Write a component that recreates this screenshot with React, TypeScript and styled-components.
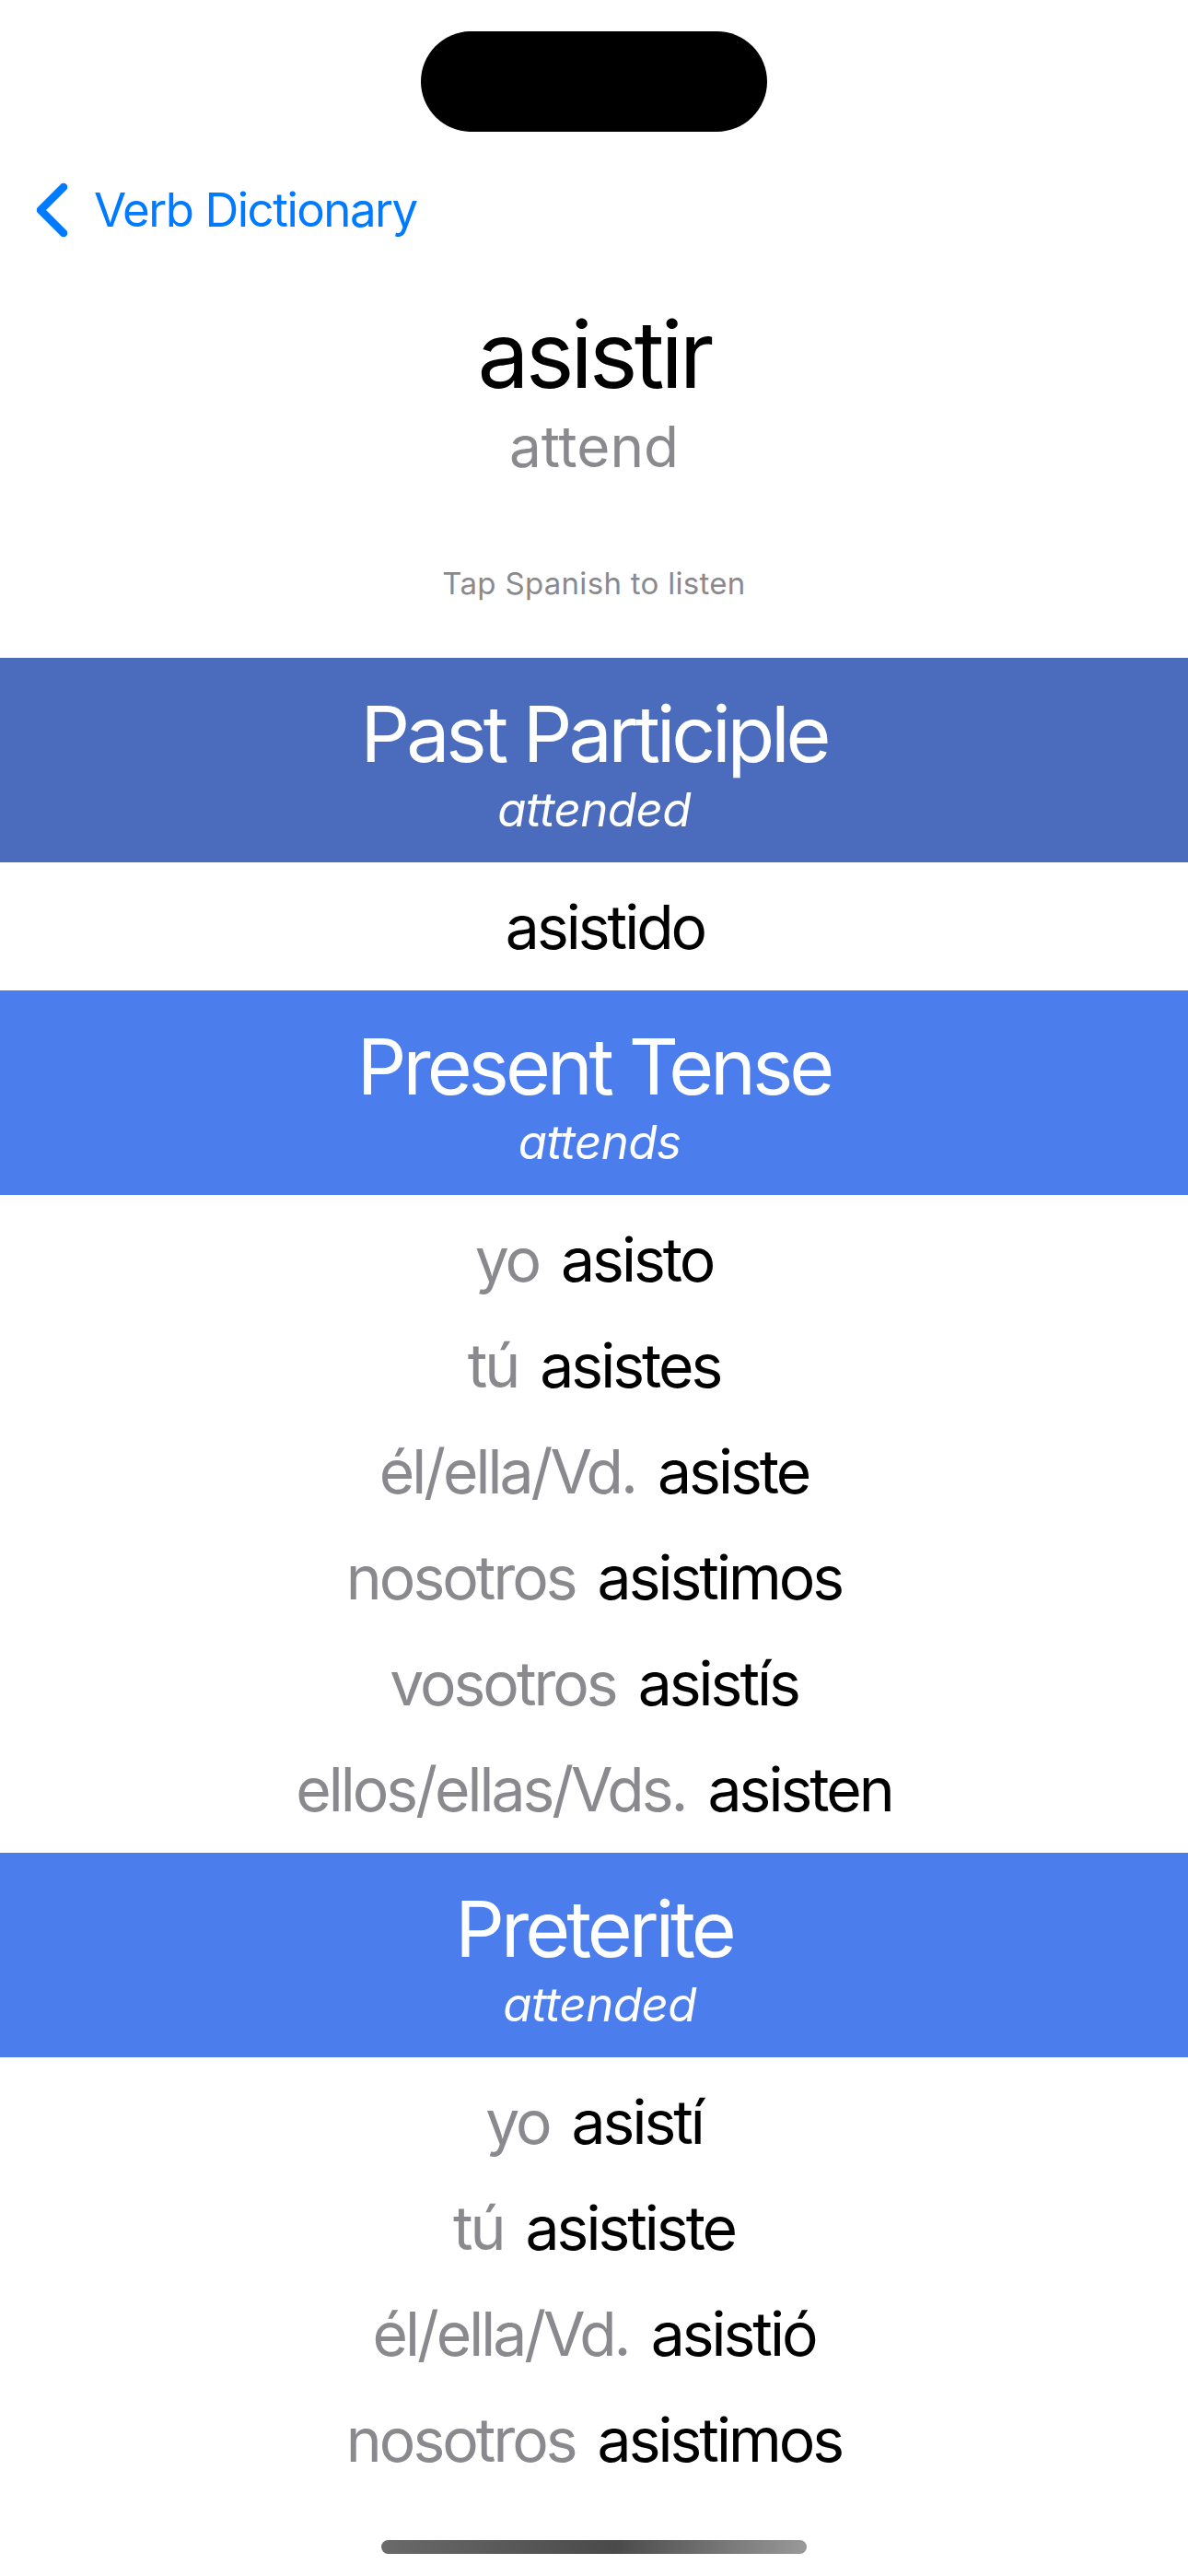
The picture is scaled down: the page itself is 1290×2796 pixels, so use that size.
import React from "react";
import styled, { createGlobalStyle } from "styled-components";

const GlobalStyle = createGlobalStyle`
  html, body {
    margin: 0;
    padding: 0;
    background: #ffffff;
  }
  body {
    font-family: Inter, "Noto Sans", "Liberation Sans", sans-serif;
    -webkit-font-smoothing: antialiased;
  }
`;

const Screen = styled.div`
  width: 1290px;
  height: 2796px;
  display: flex;
  flex-direction: column;
  background: #ffffff;
  overflow: hidden;
`;

const StatusArea = styled.div`
  height: 180px;
  flex: none;
  display: flex;
  justify-content: center;
  padding-top: 34px;
  box-sizing: border-box;
`;

const Island = styled.div`
  width: 376px;
  height: 109px;
  border-radius: 55px;
  background: #000000;
`;

const NavBar = styled.div`
  height: 95px;
  flex: none;
  display: flex;
  align-items: center;
  padding-left: 36px;
  gap: 24px;
  color: #007aff;
`;

const BackLabel = styled.span`
  font-size: 51px;
  line-height: 61px;
  letter-spacing: -1.5px;
`;

const ScrollArea = styled.div`
  flex: 1 1 auto;
  min-height: 0;
  overflow: hidden;
  display: block;
`;

const Header = styled.div`
  display: flex;
  flex-direction: column;
  align-items: center;
  padding-top: 50px;
  padding-bottom: 61px;
`;

const Infinitive = styled.div`
  font-size: 100px;
  line-height: 120px;
  color: #000000;
  letter-spacing: -3.9px;
`;

const Translation = styled.div`
  font-size: 62px;
  line-height: 72px;
  margin-top: 4px;
  color: #8a8a8e;
  letter-spacing: 0px;
`;

const Hint = styled.div`
  font-size: 33px;
  line-height: 40px;
  margin-top: 92px;
  color: #8a8a8e;
  letter-spacing: 0.3px;
`;

const Band = styled.div<{ $tone: "dark" | "bright" }>`
  height: 222px;
  box-sizing: border-box;
  padding-top: 32px;
  display: flex;
  flex-direction: column;
  align-items: center;
  color: #ffffff;
  background: ${(p) => (p.$tone === "dark" ? "#4b6bbd" : "#4c7dec")};
`;

const BandTitle = styled.div`
  font-size: 84px;
  line-height: 102px;
  letter-spacing: -4px;
`;

const BandSubtitle = styled.div<{ $indent: number }>`
  font-size: 51px;
  line-height: 61px;
  font-style: italic;
  letter-spacing: -0.6px;
  padding-left: ${(p) => p.$indent}px;
`;

const RowList = styled.div`
  display: flex;
  flex-direction: column;
  padding: 12px 0;
`;

const Row = styled.div`
  height: 115px;
  display: flex;
  align-items: center;
  justify-content: center;
  gap: 24px;
  font-size: 66px;
  letter-spacing: -3px;
`;

const Pronoun = styled.span`
  color: #8a8a8e;
`;

const Verb = styled.span`
  color: #000000;
`;

const BottomSafe = styled.div`
  height: 90px;
  flex: none;
  display: flex;
  justify-content: center;
  padding-top: 51px;
  box-sizing: border-box;
`;

const HomeIndicator = styled.div`
  width: 462px;
  height: 15px;
  border-radius: 8px;
  background: linear-gradient(100deg, #6a6a6a 0%, #4a4a4a 55%, #9a9a9a 100%);
`;

type Conj = { pronoun: string; form: string };
type Section = {
  title: string;
  english: string;
  tone: "dark" | "bright";
  indent: number;
  rows: Conj[];
};

const sections: Section[] = [
  {
    title: "Past Participle",
    english: "attended",
    tone: "dark",
    indent: 0,
    rows: [{ pronoun: "", form: "asistido" }],
  },
  {
    title: "Present Tense",
    english: "attends",
    tone: "bright",
    indent: 12,
    rows: [
      { pronoun: "yo", form: "asisto" },
      { pronoun: "tú", form: "asistes" },
      { pronoun: "él/ella/Vd.", form: "asiste" },
      { pronoun: "nosotros", form: "asistimos" },
      { pronoun: "vosotros", form: "asistís" },
      { pronoun: "ellos/ellas/Vds.", form: "asisten" },
    ],
  },
  {
    title: "Preterite",
    english: "attended",
    tone: "bright",
    indent: 12,
    rows: [
      { pronoun: "yo", form: "asistí" },
      { pronoun: "tú", form: "asististe" },
      { pronoun: "él/ella/Vd.", form: "asistió" },
      { pronoun: "nosotros", form: "asistimos" },
    ],
  },
];

const Chevron = () => (
  <svg width="42" height="62" viewBox="0 0 42 62" fill="none">
    <path
      d="M33 6 L8 31 L33 56"
      stroke="#007aff"
      strokeWidth="8.5"
      strokeLinecap="round"
      strokeLinejoin="round"
    />
  </svg>
);

export default function App() {
  return (
    <>
      <GlobalStyle />
      <Screen>
        <StatusArea>
          <Island />
        </StatusArea>
        <NavBar>
          <Chevron />
          <BackLabel>Verb Dictionary</BackLabel>
        </NavBar>
        <ScrollArea>
          <Header>
            <Infinitive>asistir</Infinitive>
            <Translation>attend</Translation>
            <Hint>Tap Spanish to listen</Hint>
          </Header>
          {sections.map((s) => (
            <React.Fragment key={s.title}>
              <Band $tone={s.tone}>
                <BandTitle>{s.title}</BandTitle>
                <BandSubtitle $indent={s.indent}>{s.english}</BandSubtitle>
              </Band>
              <RowList>
                {s.rows.map((r, i) => (
                  <Row key={i}>
                    <Pronoun>{r.pronoun}</Pronoun>
                    <Verb>{r.form}</Verb>
                  </Row>
                ))}
              </RowList>
            </React.Fragment>
          ))}
        </ScrollArea>
        <BottomSafe>
          <HomeIndicator />
        </BottomSafe>
      </Screen>
    </>
  );
}
